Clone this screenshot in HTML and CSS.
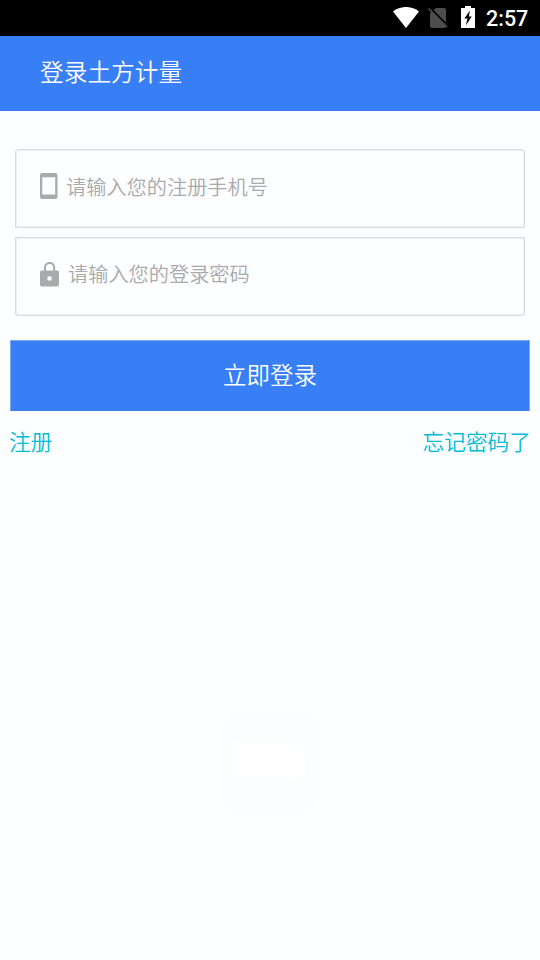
FILE: index.html
```html
<!DOCTYPE html>
<html lang="zh-CN">
<head>
<meta charset="utf-8">
<title>登录土方计量</title>
<link rel="stylesheet" href="styles.css">
</head>
<body>
<div class="status">
  <svg class="wifi" width="26" height="21" viewBox="0 0 26 21"><path fill="#fff" d="M0 4.400C7.500-1.500 18.500-1.500 26 4.400L13 21z"/></svg>
  <svg class="sim" width="20" height="22" viewBox="0 0 20 22"><path fill="#4d4d4d" d="M8 1h8q2 0 2 2v16q0 2-2 2H4q-2 0-2-2V6z"/><path d="M1.500.5 20 19" stroke="#000" stroke-width="2"/><path d="M.5 1.500 19 20" stroke="#4d4d4d" stroke-width="1.700"/></svg>
  <svg class="battery" width="14" height="22" viewBox="0 0 14 22"><path fill="#fff" d="M4 0h6v2h4v20H0V2h4z"/><path d="M9 4.500 3.300 12.500h3.200L4.800 19.500l6-9H7.800z"/></svg>
  <span class="clock">2:57</span>
</div>
<header class="header"><h1 class="title">登录土方计量</h1></header>
<main class="login">
  <div class="field field-phone">
    <svg class="phone" width="18" height="26" viewBox="0 0 18 26"><path fill="#a9aaac" fill-rule="evenodd" d="M2 0h13.500q2 0 2 2v22q0 2-2 2H2q-2 0-2-2V2q0-2 2-2zM2.300 4.200v17.300H15.200V4.200z"/></svg>
    <span class="hint">请输入您的注册手机号</span>
  </div>
  <div class="field field-password">
    <svg class="lock" width="19" height="25" viewBox="0 0 19 25"><path fill="none" stroke="#a9aaac" stroke-width="2" d="M5 10V5.500a4.600 4.600 0 0 1 9.200 0V10"/><path fill="#a9aaac" fill-rule="evenodd" d="M2 8.500h15q2 0 2 2V22.500q0 2-2 2H2q-2 0-2-2v-12q0-2 2-2zM9.500 14.200a2.300 2.300 0 1 0 0 4.600 2.300 2.300 0 0 0 0-4.600z"/></svg>
    <span class="hint">请输入您的登录密码</span>
  </div>
  <div class="submit">立即登录</div>
  <div class="links"><span>注册</span><span>忘记密码了</span></div>
  <svg class="logo" width="96" height="100" viewBox="0 0 96 100"><rect width="96" height="100" rx="18" fill="#fcfdff"/><path fill="#fff" d="M12 29h49v5h15q4 6 7 16v14h-8q-6 8-13 0H44q-4 6-9 1-6 6-12-3H12z"/><circle cx="34" cy="43" r="6" fill="none" stroke="#fdfeff" stroke-width="2"/></svg>
</main>
</body>
</html>
```

FILE: styles.css
```css
* { box-sizing: border-box; }

body {
  margin: 0;
  height: 960px;
  overflow: hidden;
  background: #fdfeff;
  font-family: "Noto Sans CJK SC", sans-serif;
  font-weight: 350;
}

svg { display: block; flex: none; }

.status {
  display: flex;
  height: 36px;
  padding: 7px 12px 0 0;
  justify-content: flex-end;
  background: #000;
}

.sim { margin-left: 9px; }
.battery { margin: -1px 11px 0 13px; }

.clock {
  width: 42px;
  color: #fff;
  font: 500 21.5px/24px Roboto, sans-serif;
}

.header {
  height: 75px;
  padding-left: 40px;
  background: #387ff5;
}

.title {
  margin: 0;
  color: #fff;
  font-size: 23.7px;
  font-weight: 350;
  line-height: 71px;
}

.login { padding: 38px 10px 0; }

.field {
  display: flex;
  height: 79px;
  margin: 0 5px;
  padding-left: 24px;
  border: 1px solid #d9dbdf;
  box-shadow: inset 0 0 0 1px #eeeff2;
}

.field-phone { border-radius: 3px 3px 0 0; }

.field-password {
  margin-top: 9px;
  border-radius: 0 0 3px 3px;
}

.phone { margin: 23px 8px 0 0; }
.lock { margin: 24px 9px 0 0; }

.hint {
  color: #a9aaac;
  font-size: 20.2px;
  line-height: 73px;
}

.field-password .hint { line-height: 71px; }

.submit {
  height: 71px;
  margin-top: 24px;
  border: 1px solid #7aa9f8;
  border-bottom: 0;
  background: #387ff5;
  color: #fff;
  font-size: 23.5px;
  line-height: 67px;
  text-align: center;
}

.links {
  display: flex;
  height: 62px;
  margin: 0 -1px;
  justify-content: space-between;
  color: #00bcd4;
  font-size: 21.7px;
  line-height: 60px;
}

.logo { margin: 239px auto 0; }
```
